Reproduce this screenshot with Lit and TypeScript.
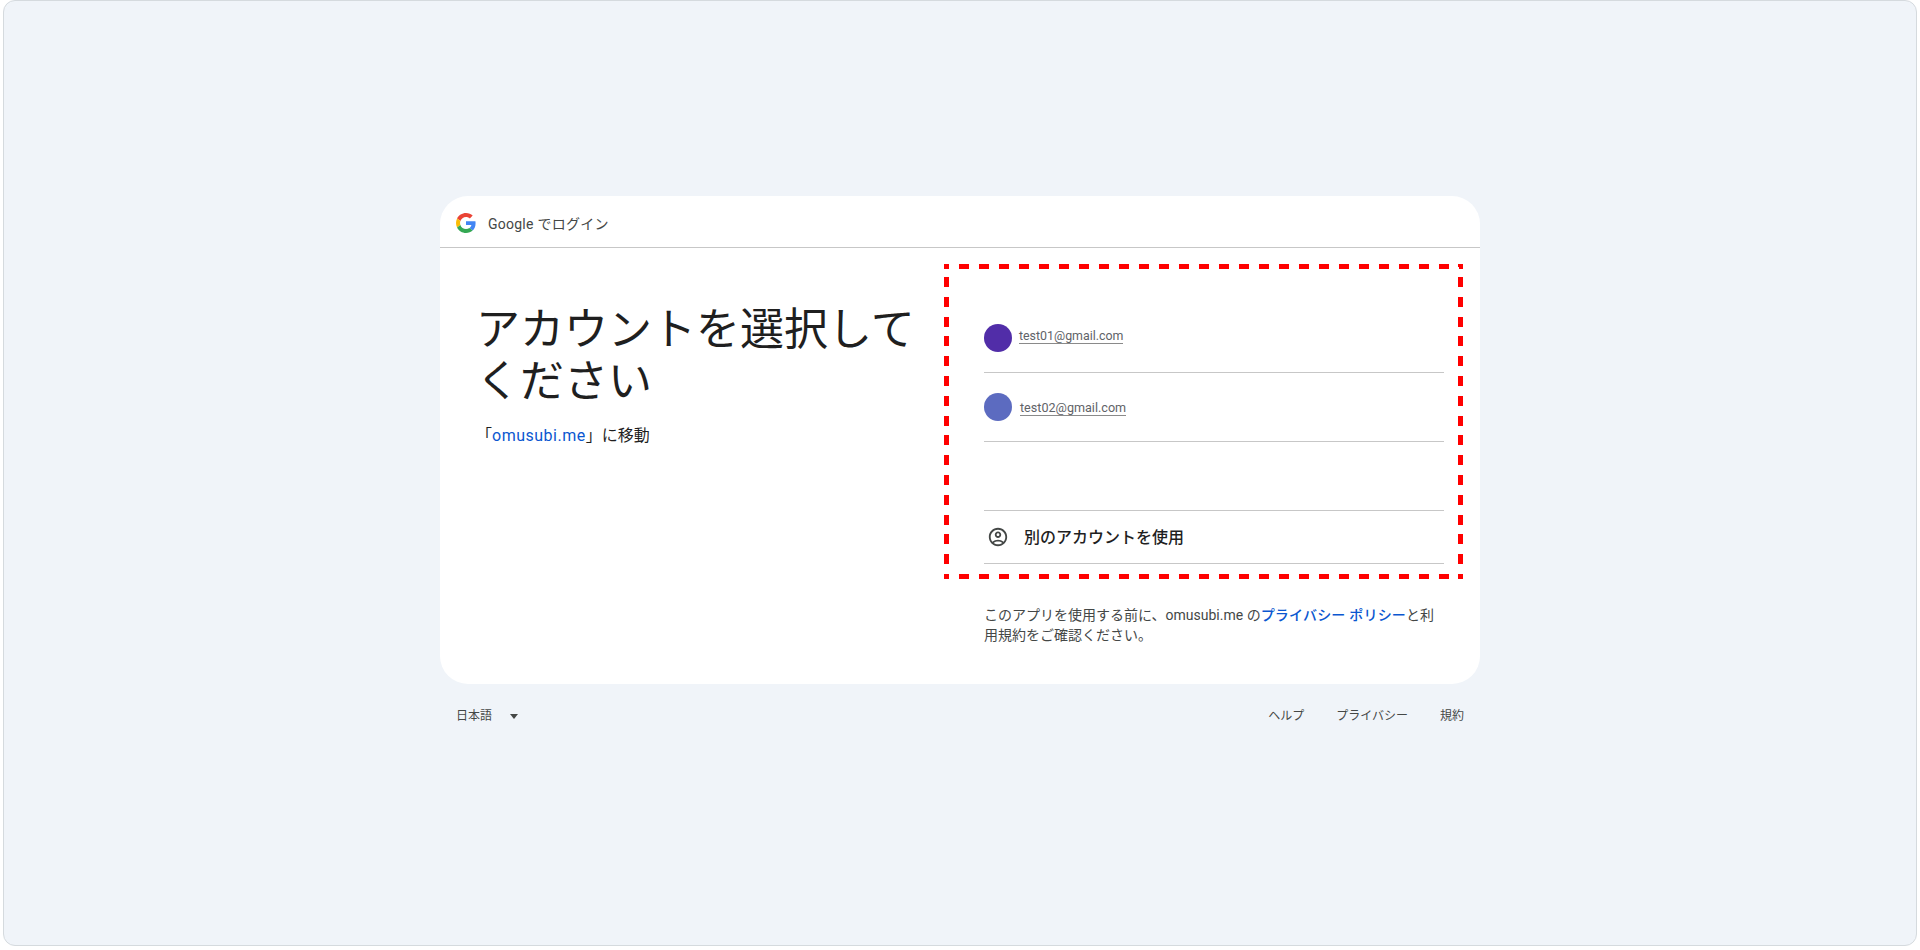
import { LitElement, html, css } from 'lit';
import { customElement } from 'lit/decorators.js';

const accounts = [
  { email: 'test01@gmail.com', color: '#512da8', cls: 'first' },
  { email: 'test02@gmail.com', color: '#5c6bc0', cls: 'second' },
];

@customElement('app-root')
export class AppRoot extends LitElement {
  static styles = css`
    :host {
      background: #ffffff;
      display: block;
      font-family: Roboto, 'Noto Sans CJK JP', sans-serif;
      height: 950px;
      overflow: hidden;
    }

    .frame {
      align-items: center;
      background: #f0f4f9;
      border: 1px solid #d5dade;
      border-radius: 12px;
      box-sizing: border-box;
      display: flex;
      flex-direction: column;
      height: 946px;
      margin: 0 3px;
      padding-top: 195px;
    }

    .card {
      background: #ffffff;
      border-radius: 28px;
      flex-shrink: 0;
      height: 488px;
      position: relative;
      width: 1040px;
    }

    .card-header {
      align-items: center;
      border-bottom: 1px solid #c7c7c7;
      box-sizing: border-box;
      color: #444746;
      display: flex;
      font-size: 14px;
      gap: 12px;
      height: 52px;
      letter-spacing: 0.25px;
      padding: 3px 0 0 16px;
    }

    .card-body {
      display: flex;
    }

    .left {
      box-sizing: border-box;
      padding: 56px 0 0 36px;
      width: 544px;
    }

    h1 {
      color: #1f1f1f;
      font-size: 44px;
      font-weight: 400;
      line-height: 52px;
      margin: 0;
      width: 450px;
    }

    .subtitle {
      color: #1f1f1f;
      font-size: 16px;
      font-weight: 400;
      line-height: 24px;
      margin: 16px 0 0;
    }

    a {
      color: #0b57d0;
      text-decoration: none;
    }

    .subtitle a {
      letter-spacing: 0.5px;
    }

    .notice a {
      font-weight: 500;
      letter-spacing: 0.2px;
    }

    .right {
      box-sizing: border-box;
      padding-top: 56px;
      width: 460px;
    }

    .row {
      align-items: center;
      border-bottom: 1px solid #c7c7c7;
      display: flex;
      height: 68px;
    }

    .avatar {
      border-radius: 50%;
      height: 28px;
      width: 28px;
    }

    .email {
      border-bottom: 1px solid #8a8a8a;
      color: #5f6368;
      font-size: 12.4px;
      line-height: 14px;
      margin-bottom: 4px;
      margin-left: 7px;
    }

    .second .email {
      font-size: 12.6px;
      margin-bottom: -2px;
      margin-left: 8px;
    }

    .other {
      border-bottom: 1px solid #c7c7c7;
      box-sizing: content-box;
      color: #1f1f1f;
      font-size: 16px;
      font-weight: 500;
      gap: 15px;
      height: 50px;
      padding: 0 0 2px 3px;
    }

    .other svg {
      fill: #444746;
      height: 22px;
      margin-top: 2px;
      width: 22px;
    }

    .notice {
      color: #444746;
      font-size: 14px;
      line-height: 20px;
      margin: 41px 0 0;
    }

    .annotation {
      background:
        repeating-linear-gradient(90deg, #ff0000 0 5px, transparent 5px 15px, #ff0000 15px 20px) top / 100% 5px no-repeat,
        repeating-linear-gradient(90deg, #ff0000 0 5px, transparent 5px 15px, #ff0000 15px 20px) bottom / 100% 5px no-repeat,
        repeating-linear-gradient(180deg, #ff0000 0 3.2px, transparent 3.2px 13px, #ff0000 13px 19.8px) left / 5px 100% no-repeat,
        repeating-linear-gradient(180deg, #ff0000 0 3.2px, transparent 3.2px 13px, #ff0000 13px 19.8px) right / 5px 100% no-repeat;
      height: 315px;
      left: 504px;
      position: absolute;
      top: 68px;
      width: 519px;
    }

    .links {
      box-sizing: border-box;
      color: #444746;
      display: flex;
      flex-shrink: 0;
      font-size: 12px;
      justify-content: space-between;
      line-height: 16px;
      padding: 24px 16px 0;
      width: 1040px;
    }

    .lang {
      align-items: center;
      display: flex;
      gap: 18px;
    }

    .caret {
      border-left: 4px solid transparent;
      border-right: 4px solid transparent;
      border-top: 5px solid #444746;
    }

    .help {
      display: flex;
      gap: 32px;
    }
  `;

  renderLogo() {
    return html`
      <svg width="20" height="20" viewBox="0 0 48 48">
        <path fill="#EA4335" d="M24 9.5c3.54 0 6.71 1.22 9.21 3.6l6.85-6.85C35.9 2.38 30.47 0 24 0 14.62 0 6.51 5.38 2.56 13.22l7.98 6.19C12.43 13.72 17.74 9.5 24 9.5z"></path>
        <path fill="#4285F4" d="M46.98 24.55c0-1.57-.15-3.09-.38-4.55H24v9.02h12.94c-.58 2.96-2.26 5.48-4.78 7.18l7.73 6c4.51-4.18 7.09-10.36 7.09-17.65z"></path>
        <path fill="#FBBC05" d="M10.53 28.59c-.48-1.45-.76-2.99-.76-4.59s.27-3.14.76-4.59l-7.98-6.19C.92 16.46 0 20.12 0 24c0 3.88.92 7.54 2.56 10.78l7.97-6.19z"></path>
        <path fill="#34A853" d="M24 48c6.48 0 11.93-2.13 15.89-5.81l-7.73-6c-2.15 1.45-4.92 2.3-8.16 2.3-6.26 0-11.57-4.22-13.47-9.91l-7.98 6.19C6.51 42.62 14.62 48 24 48z"></path>
      </svg>
    `;
  }

  renderAccountIcon() {
    return html`
      <svg viewBox="0 0 24 24">
        <path d="M12 2C6.48 2 2 6.48 2 12s4.48 10 10 10 10-4.48 10-10S17.52 2 12 2zM7.35 18.5C8.66 17.56 10.26 17 12 17s3.34.56 4.65 1.5C15.34 19.44 13.74 20 12 20s-3.34-.56-4.65-1.5zm10.79-1.38C16.45 15.8 14.32 15 12 15s-4.45.8-6.14 2.12C4.7 15.73 4 13.95 4 12c0-4.42 3.58-8 8-8s8 3.58 8 8c0 1.95-.7 3.73-1.86 5.12z"></path>
        <path d="M12 6c-1.93 0-3.5 1.57-3.5 3.5S10.07 13 12 13s3.5-1.57 3.5-3.5S13.93 6 12 6zm0 5c-.83 0-1.5-.67-1.5-1.5S11.17 8 12 8s1.5.67 1.5 1.5S12.83 11 12 11z"></path>
      </svg>
    `;
  }

  render() {
    return html`
      <div class="frame">
        <div class="card">
          <header class="card-header">
            ${this.renderLogo()}
            <span>Google でログイン</span>
          </header>

          <div class="card-body">
            <section class="left">
              <h1>アカウントを選択してください</h1>
              <p class="subtitle">「<a href="#">omusubi.me</a>」に移動</p>
            </section>

            <section class="right">
              ${accounts.map(account => html`
                <div class="row ${account.cls}">
                  <div class="avatar" style="background: ${account.color}"></div>
                  <span class="email">${account.email}</span>
                </div>
              `)}
              <div class="row"></div>
              <div class="row other">
                ${this.renderAccountIcon()}
                <span>別のアカウントを使用</span>
              </div>
              <p class="notice">
                このアプリを使用する前に、omusubi.me の<a href="#">プライバシー ポリシー</a>と利用規約をご確認ください。
              </p>
            </section>
          </div>

          <div class="annotation"></div>
        </div>

        <footer class="links">
          <div class="lang">
            <span>日本語</span>
            <span class="caret"></span>
          </div>
          <div class="help">
            <span>ヘルプ</span>
            <span>プライバシー</span>
            <span>規約</span>
          </div>
        </footer>
      </div>
    `;
  }
}
